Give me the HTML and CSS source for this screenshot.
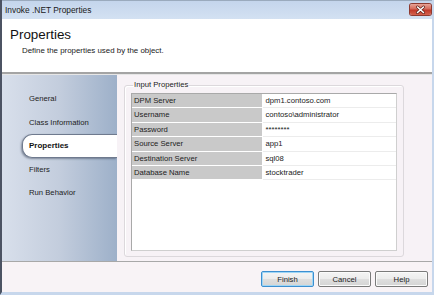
FILE: index.html
```html
<!DOCTYPE html>
<html>
<head>
<meta charset="utf-8">
<link rel="stylesheet" href="styles.css">
</head>
<body>
<div class="window">
  <div class="titlebar">
    <span class="title">Invoke .NET Properties</span>
    <div class="close">
      <svg width="21" height="11" viewBox="0 0 21 11"><path d="M7.5 3 L13.5 8.5 M13.5 3 L7.5 8.5" stroke="#5a1d16" stroke-width="3" stroke-linecap="round"/><path d="M7.5 3 L13.5 8.5 M13.5 3 L7.5 8.5" stroke="#ffffff" stroke-width="1.6" stroke-linecap="round"/></svg>
    </div>
  </div>
  <div class="header">
    <div class="h-title">Properties</div>
    <div class="h-sub">Define the properties used by the object.</div>
  </div>
  <div class="hsep"></div>
  <div class="main">
    <div class="nav">
      <div class="nav-item">General</div>
      <div class="nav-item">Class Information</div>
      <div class="nav-item active">Properties</div>
      <div class="nav-item">Filters</div>
      <div class="nav-item">Run Behavior</div>
    </div>
    <div class="content">
      <fieldset class="group">
        <legend class="legend">Input Properties</legend>
        <div class="list">
          <div class="name">DPM Server</div><div class="val">dpm1.contoso.com</div>
          <div class="name">Username</div><div class="val">contoso\administrator</div>
          <div class="name">Password</div><div class="val">********</div>
          <div class="name">Source Server</div><div class="val">app1</div>
          <div class="name">Destination Server</div><div class="val">sql08</div>
          <div class="name">Database Name</div><div class="val">stocktrader</div>
        </div>
      </fieldset>
    </div>
  </div>
  <div class="footer">
    <button class="btn default">Finish</button>
    <button class="btn">Cancel</button>
    <button class="btn">Help</button>
  </div>
</div>
</body>
</html>
```
FILE: styles.css
```css
html, body {
  margin: 0;
  padding: 0;
  background: #ffffff;
}
body {
  font-family: "Liberation Sans", Arial, sans-serif;
  color: #1b1b1b;
}
.window {
  width: 434px;
  height: 295px;
  box-sizing: border-box;
  display: flex;
  flex-direction: column;
  border-left: 2px solid #4c5363;
  border-right: 2px solid #c7d7ec;
  border-bottom: 3px solid #c7d7ec;
  overflow: hidden;
}
.titlebar {
  height: 19px;
  flex: none;
  display: flex;
  align-items: flex-start;
  background: linear-gradient(#c4d5ec, #d3e1f2);
  border-top: 1px solid #9aaabd;
  box-sizing: border-box;
}
.title {
  font-size: 8.4px;
  line-height: 18px;
  padding-left: 3px;
  color: #1a1a1a;
}
.close {
  margin-left: auto;
  margin-right: 1px;
  margin-top: 3px;
  width: 21px;
  height: 11px;
  border-radius: 2px;
  background: linear-gradient(#e8a497 0%, #d46a5a 45%, #c0392a 55%, #d4624e 100%);
  box-shadow: 0 0 0 1px #8e3a30;
  display: flex;
}
.header {
  height: 53px;
  flex: none;
  background: #ffffff;
  box-sizing: border-box;
  padding: 8px 0 0 8px;
}
.h-title {
  font-size: 13.4px;
  line-height: 16px;
  color: #111;
}
.h-sub {
  font-size: 7.9px;
  line-height: 10px;
  margin-top: 3px;
  padding-left: 12px;
  color: #222;
}
.hsep {
  height: 2px;
  flex: none;
  background: #a4a4a4;
  border-bottom: 1px solid #e6e6e6;
}
.main {
  flex: 1;
  display: flex;
  min-height: 0;
}
.nav {
  width: 115px;
  flex: none;
  background: linear-gradient(to right, #d8dfeb, #c3cddd 50%, #9db0c9);
  padding-top: 12px;
  box-sizing: border-box;
}
.nav-item {
  height: 23.5px;
  margin-left: 20px;
  padding-left: 7px;
  font-size: 7.7px;
  line-height: 23.5px;
  box-sizing: border-box;
  color: #222;
}
.nav-item.active {
  background: #ffffff;
  font-weight: bold;
  font-size: 8px;
  color: #111;
  border: 1px solid #6f7a8e;
  border-right: none;
  border-radius: 10px 0 0 10px;
  line-height: 21.5px;
  padding-left: 6px;
  box-shadow: -1px 1px 2px rgba(40, 50, 70, 0.45);
}
.content {
  flex: 1;
  background: #f7f2f6;
  padding: 5px 28px 4px 7px;
  display: flex;
  flex-direction: column;
  box-sizing: border-box;
}
.group {
  flex: 1;
  margin: 0;
  border: 1px solid #dcd8dc;
  border-radius: 3px;
  padding: 3px 6px 5px 6px;
  display: flex;
  flex-direction: column;
  min-height: 0;
  box-shadow: inset 1px 1px 0 #ffffff;
}
.legend {
  font-size: 7.7px;
  line-height: 10px;
  padding: 0 1px;
  margin-left: 2px;
  color: #222;
}
.list {
  flex: 1;
  background: #ffffff;
  border: 1px solid #a9a9a9;
  border-right-color: #cfcfcf;
  border-bottom-color: #cfcfcf;
  display: grid;
  grid-template-columns: 130px 133px;
  grid-auto-rows: 13.4px;
  column-gap: 1px;
  row-gap: 1px;
  align-content: start;
}
.name, .val {
  font-size: 7.7px;
  line-height: 13.4px;
  white-space: nowrap;
  overflow: hidden;
  color: #222;
}
.name {
  background: #c9c9c9;
  padding-left: 2px;
}
.val {
  padding-left: 2.5px;
  box-shadow: 0 1px 0 #ececec;
}
.footer {
  flex: none;
  height: 31px;
  box-sizing: border-box;
  background: #f8f3f6;
  border-top: 1px solid #a8a8a8;
  display: flex;
  justify-content: flex-end;
  align-items: flex-start;
  gap: 4px;
  padding: 9px 4px 0 0;
}
.btn {
  width: 53px;
  height: 16px;
  margin: 0;
  padding: 0;
  font-family: "Liberation Sans", Arial, sans-serif;
  font-size: 7.7px;
  color: #1b1b1b;
  border: 1px solid #7a7a7a;
  border-radius: 2px;
  background: linear-gradient(#f4f4f4 0%, #ececec 50%, #dfdfdf 50%, #d4d4d4 100%);
  box-shadow: inset 0 0 0 1px #fbfbfb;
}
.btn.default {
  border-color: #3c8fd0;
  box-shadow: inset 0 0 0 1px #9fd6f6;
}
```
